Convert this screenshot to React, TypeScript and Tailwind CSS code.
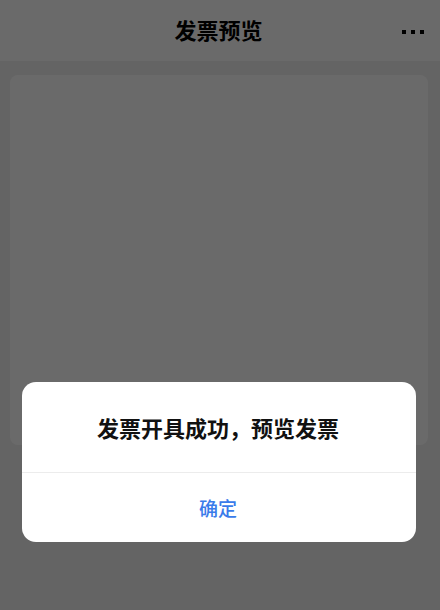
export default function App() {
  return (
    <div
      className="relative w-[440px] h-[610px] overflow-hidden bg-[#f0f0f0]"
      style={{ fontFamily: '"Noto Sans CJK SC", "Noto Sans", sans-serif' }}
    >
      {/* Header */}
      <header className="h-[61px] bg-white flex items-center justify-center relative">
        <h1 className="text-[22px] font-bold text-black leading-none -mt-[4px] -ml-[3px]">发票预览</h1>
        <div className="absolute right-[16px] top-[30px] flex gap-[5px]">
          <span className="w-[4px] h-[4px] bg-black" />
          <span className="w-[4px] h-[4px] bg-black" />
          <span className="w-[4px] h-[4px] bg-black" />
        </div>
      </header>

      {/* Body */}
      <main className="pl-[10px] pr-[12px] pt-[14px]">
        <div className="h-[370px] bg-white rounded-[8px]" />
      </main>

      {/* Mask + dialog */}
      <div className="absolute inset-0 bg-black/[0.585] px-[22px] pt-[382px]">
        <div className="w-[394px] bg-white rounded-[14px] overflow-hidden">
          <div className="h-[91px] flex items-center justify-center border-b border-[#ececec]">
            <p className="text-[22px] font-bold text-[#111] leading-none -ml-[2px]">发票开具成功，预览发票</p>
          </div>
          <div className="h-[69px] flex items-center justify-center">
            <span className="text-[19px] font-medium text-[#3a7bea] leading-none -ml-[2px]">确定</span>
          </div>
        </div>
      </div>
    </div>
  );
}
